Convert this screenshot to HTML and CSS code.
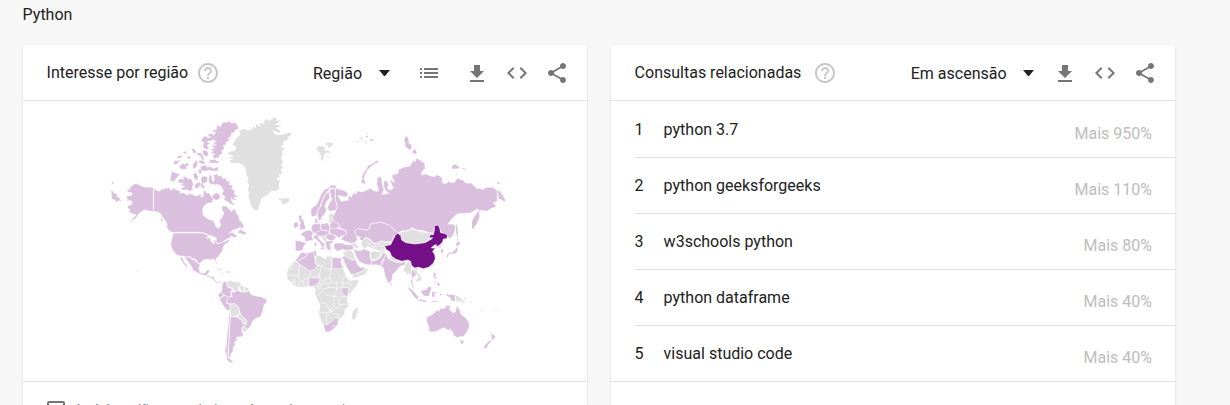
FILE: index.html
```html
<!DOCTYPE html>
<html lang="pt-BR">
<head>
<meta charset="utf-8">
<title>Python</title>
<link rel="stylesheet" href="styles.css">
</head>
<body>
<svg class="defs" width="0" height="0" aria-hidden="true">
  <symbol id="help" viewBox="0 0 24 24"><path d="M11 18h2v-2h-2v2zm1-16C6.480 2 2 6.480 2 12s4.480 10 10 10 10-4.480 10-10S17.520 2 12 2zm0 18c-4.410 0-8-3.590-8-8s3.590-8 8-8 8 3.590 8 8-3.590 8-8 8zm0-14c-2.210 0-4 1.790-4 4h2c0-1.100.9-2 2-2s2 .9 2 2c0 2-3 1.750-3 5h2c0-2.250 3-2.500 3-5 0-2.210-1.790-4-4-4z"/></symbol>
  <symbol id="list" viewBox="0 0 24 24"><path d="M3 13h2v-2H3v2zm0 4h2v-2H3v2zm0-8h2V7H3v2zm4 4h14v-2H7v2zm0 4h14v-2H7v2zM7 7v2h14V7H7z"/></symbol>
  <symbol id="download" viewBox="0 0 24 24"><path d="M19 10h-4V4H9v6H5l7 7 7-7zM5 19v2h14v-2H5z"/></symbol>
  <symbol id="code" viewBox="0 0 24 24"><path d="M9.400 16.600L4.800 12l4.600-4.600L8 6l-6 6 6 6 1.400-1.400zm5.200 0l4.600-4.600-4.600-4.600L16 6l6 6-6 6-1.400-1.400z"/></symbol>
  <symbol id="share" viewBox="0 0 24 24"><path d="M18 16.080c-.76 0-1.440.3-1.960.77L8.910 12.700c.05-.23.09-.46.09-.7s-.04-.47-.09-.7l7.050-4.110c.54.5 1.250.81 2.040.81 1.660 0 3-1.340 3-3s-1.340-3-3-3-3 1.340-3 3c0 .24.04.47.09.7L8.040 9.810C7.500 9.310 6.790 9 6 9c-1.660 0-3 1.340-3 3s1.340 3 3 3c.79 0 1.500-.31 2.040-.81l7.120 4.160c-.05.21-.08.43-.08.65 0 1.610 1.310 2.920 2.920 2.920s2.920-1.310 2.920-2.920-1.310-2.920-2.920-2.920z"/></symbol>
</svg>
<h1 class="page-title">Python</h1>
<main class="cards">
  <section class="card">
    <header class="card-head">
      <h2 class="card-title">Interesse por região</h2>
      <svg class="icon help"><use href="#help"/></svg>
      <div class="tools">
        <span class="select select-wide">Região</span><span class="caret caret-wide"></span>
        <svg class="icon list"><use href="#list"/></svg>
        <svg class="icon"><use href="#download"/></svg>
        <svg class="icon"><use href="#code"/></svg>
        <svg class="icon"><use href="#share"/></svg>
      </div>
    </header>
    <div class="map-box">
      <svg class="map" viewBox="23 101 564 280">
        <!-- North America -->
        <g transform="translate(100 110) scale(.33333)">
          <g class="on">
            <path d="M160 233 150 231 139 232 125 228 115 223 108 220 98 225 90 231 90 237 80 241 84 247 95 248 96 254 88 257 78 259 82 267 80 273 92 272 97 276 94 284 84 287 82 293 90 299 85 305 96 311 108 314 103 322 95 330 84 339 96 334 108 325 114 315 122 306 134 300 148 303 160 305z"/>
            <path d="M161 234 168 240 178 244 186 236 192 238 198 232 203 237 207 230 212 241 222 234 230 240 240 241 240 250 250 248 262 256 268 250 276 253 290 258 302 251 304 262 310 258 310 246 316 240 320 250 326 248 334 258 340 266 336 278 322 280 312 288 308 300 310 315 320 325 334 330 343 335 348 350 357 355 362 345 358 332 366 322 372 310 366 300 366 288 380 288 388 298 395 305 400 296 405 298 410 310 416 318 418 329 428 340 432 350 428 356 420 352 408 358 396 362 386 372 396 366 404 372 412 378 404 384 394 378 388 384 376 390 366 398 354 402 346 398 350 385 340 380 325 375 308 367 218 367 210 360 204 350 200 342 196 332 188 322 182 312 174 306 161 305z"/>
            <path d="M220 369H308L320 374 326 378 318 384 330 383 334 396 344 402 340 390 348 392 350 402 366 398 378 392 386 388 390 393 382 398 374 404 370 412 366 425 358 436 348 446 350 455 353 463 349 462 343 447 335 449 322 448 310 450 303 458 296 462 290 452 284 446 276 446 272 440 260 441 248 438 240 438 230 434 220 424 214 412 213 400 216 385z"/>
            <path d="M250 441 271 442 276 449 284 449 290 458 300 463 297 475 300 487 309 490 316 488 320 480 330 480 326 490 318 497 306 495 290 487 278 480 276 472 268 460 258 447z"/>
            <path d="M210 212 214 190 216 183 224 188 236 190 238 196 230 204 226 208 224 216 218 214z"/>
            <path d="M232 211 242 206 252 208 246 200 258 200 266 208 273 204 278 216 280 224 276 234 283 240 274 240 270 246 262 239 252 241 240 237 254 229 240 226 250 220 236 219z"/>
          </g>
          <g class="on isle">
            <path d="M34 240 44 251 52 253 50 260 58 264 64 275 56 271 50 276 42 268 36 268zM35 216 40 217 41 221 36 221zM240 439 247 443 252 455 262 470 260 472 250 460 244 450zM198 344 206 350 216 364 214 367 204 358zM181 320 187 328 189 337 183 330zM111 484h3v2h-3zM414 369 420 358 430 363 440 370 430 374 424 370z"/>
            <path d="M220 160 228 150 232 155 241 147 237 156 228 164zM230 142 244 136 246 141 236 145zM250 126 259 124 259 131 251 130zM238 170 248 160 254 164 262 158 267 166 256 170 262 176 244 178zM275 115 284 119 290 127 280 130zM263 137 272 142 268 148 262 144zM282 158 290 151 292 166 283 177 278 169zM288 130 302 128 308 140 298 137zM294 154 306 151 316 157 310 162 300 159zM280 190 288 189 294 200 291 212 283 204zM296 178 306 180 302 192 296 188zM286 222 300 217 300 226 292 236 284 232zM304 202 314 198 320 212 314 220 304 216zM306 224 316 230 308 236z"/>
          </g>
          <path class="off isle" d="M318 497 326 494 328 499 342 499 344 508 348 514 356 516 366 514 364 520 352 520 344 516 336 506zM346 475 358 475 371 482 366 482 354 477zM376 485 390 484 394 488 380 488zM362 489h6v2h-6z"/>
        </g>
        <!-- Arctic islands, Greenland, Iceland -->
        <g transform="translate(200 110) scale(.33333)">
          <g class="on isle">
            <path d="M66 43 72 36 80 39 86 34 94 40 105 38 112 46 115 56 104 60 103 67 94 70 91 80 83 83 88 91 78 96 76 106 69 106 72 118 64 120 66 132 56 136 58 144 48 142 44 147 38 137 46 132 34 128 41 123 32 116 46 116 34 106 50 107 40 98 51 95 37 88 29 96 21 84 34 82 23 75 35 70 40 77 48 67 37 62 51 57 50 46 62 52z"/>
            <path d="M8 84 18 78 27 90 21 95 30 101 20 105 27 115 17 118 8 108 14 98 4 94zM8 122 18 121 26 132 20 140 10 134zM3 137 9 136 12 149 4 148zM30 151 44 149 54 154 56 160 40 158 28 159zM1 170 12 168 14 161 20 172 32 170 40 176 54 171 55 181 42 183 26 180 14 183 4 180z"/>
            <path d="M28 198 34 194 35 210 42 220 34 224 26 214zM42 196 52 192 55 200 64 197 66 206 76 205 80 214 88 214 88 226 98 226 94 236 104 242 102 251 113 262 101 261 109 271 98 268 92 260 95 275 106 286 92 281 80 273 72 270 76 260 66 252 72 242 62 226 50 222 44 226 38 218 44 210zM40 254 50 248 60 257 58 267 48 270 38 264zM11 202 20 200 23 213 13 218zM2 220 10 218 8 230 2 230z"/>
            <path d="M298 318 304 320 301 328 296 325z"/>
          </g>
          <path class="off isle" d="M118 62 132 56 148 64 146 56 156 62 160 49 170 56 166 40 180 50 180 38 190 42 196 28 210 32 222 22 230 25 228 34 244 29 233 40 222 43 243 47 226 54 242 62 240 69 218 60 222 72 238 76 252 73 272 67 274 74 264 82 262 90 252 93 249 104 242 112 255 115 246 124 248 134 242 144 250 156 243 164 250 174 242 178 248 190 236 193 239 202 228 206 240 212 236 224 238 236 226 242 216 243 204 252 194 260 184 265 181 278 176 290 175 300 168 302 160 297 152 286 151 272 145 260 148 248 143 238 148 226 142 216 145 206 139 194 138 180 133 169 120 160 106 158 94 159 88 151 100 148 86 142 104 138 80 132 92 124 104 124 110 112 98 104 104 93 112 82 121 76z"/>
          <path class="off isle" d="M236 264 246 267 254 264 265 264 269 271 260 280 250 283 242 277 247 273 238 270z"/>
        </g>
        <!-- South America -->
        <g transform="translate(200 200) scale(.33333)">
          <g class="on">
            <path d="M72 243 80 247 84 262 98 266 92 276 94 290 84 294 74 286 62 278 66 268 66 255z"/>
            <path d="M60 276 72 284 66 290 58 294 54 286z"/>
            <path d="M58 296 68 290 74 286 86 292 80 302 80 310 90 312 91 322 88 334 78 328 68 314z"/>
            <path d="M86 292 96 290 94 276 104 276 114 270 118 274 128 276 140 274 146 270 154 284 168 288 184 290 198 296 201 304 192 316 188 334 182 350 166 356 158 364 152 378 142 390 130 382 140 372 138 360 128 350 118 340 116 322 104 312 92 312 80 308 80 300z"/>
            <path d="M92 350 104 350 114 352 128 364 130 372 140 368 136 376 126 384 126 396 130 402 126 410 110 412 112 420 104 426 106 434 100 442 99 454 92 464 92 474 84 470 86 440 88 400 89 370z"/>
            <path d="M88 334 92 350 88 380 87 420 84 450 84 472 92 478 101 488 90 488 80 478 80 466 74 450 79 440 80 414 84 380z"/>
          </g>
          <g class="off">
            <path d="M80 247 90 241 100 245 118 246 124 256 116 262 116 270 102 276 98 264 84 262z"/>
            <path d="M122 256 134 260 132 276 124 274 118 264zM134 260 147 264 144 274 132 276z"/>
            <path d="M91 312 104 311 116 322 119 336 112 346 100 350 92 348 90 330z"/>
            <path d="M114 346 120 338 128 350 138 358 140 368 130 372 124 360 114 354z"/>
            <path d="M128 380 142 386 140 394 134 397 126 394z"/>
          </g>
        </g>
        <!-- Europe, Africa, Middle East -->
        <g transform="translate(280 200) scale(.33333)">
          <g class="off">
            <path d="M40 186 50 182 88 210 108 198 122 194 154 206 190 204 194 216 200 232 210 242 238 238 232 254 216 274 206 288 202 300 206 318 194 330 194 342 180 356 172 372 160 386 148 394 136 394 130 376 122 360 116 340 120 316 112 300 104 280 106 268 100 258 82 260 60 262 46 260 34 248 22 238 20 222 24 206 34 192z"/>
            <path d="M108 168 114 165 126 170 136 176 142 168 155 170 156 206 150 210 120 196 110 196 106 182z"/>
            <path d="M230 320 235 328 226 358 218 361 215 348 218 334z"/>
            <path d="M146 42 160 40 162 60 158 70 144 68 148 58z"/>
            <path d="M246 120 258 114 270 120 282 130 292 130 304 122 318 128 335 124 330 134 316 140 314 148 298 154 288 150 276 144 262 140 252 148 244 134z"/>
            <path d="M270 156 282 152 296 156 310 148 320 152 304 160 298 172 286 180 272 178z"/>
            <path d="M206 126 228 130 238 142 228 146 216 138z"/>
            <path d="M188 156 214 150 222 164 228 180 216 180 194 170z"/>
            <path d="M216 224 234 218 252 212 254 202 264 210 254 224 232 232 218 234z"/>
            <path d="M122 106 136 108 142 120 138 128 130 122z"/>
          </g>
          <path class="border" d="M36 192 38 200 26 212M58 190 56 230 24 224M56 230 64 246 90 226 92 210M124 196 118 228 90 236M118 228 124 244 150 232 152 208M150 232 154 246 186 246 192 232 200 226M44 236 46 258M58 242 56 262M70 240 72 260M82 236 84 260M34 236 42 246 30 250M118 244 112 262 130 250 154 250M104 272 122 262 124 252M112 286 124 280 128 266 154 262 170 264 170 246M170 264 188 262 186 246M188 262 190 248 210 250 216 258M118 308 138 310 142 320 150 334 164 312 160 296 168 282 170 264M118 338 150 338 150 316M150 338 166 326 180 320 178 300 170 288M140 340 140 374M160 340 176 344 174 356M202 290 180 290M180 314 206 312M132 284 168 290M206 262 216 272"/>
          <path class="border" d="M262 128 282 142 292 140M292 130 302 138 320 140"/>
          <g class="on">
            <path d="M44 184 56 168 64 156 80 160 80 168 66 176 56 184z"/>
            <path d="M80 160 102 154 104 168 106 190 112 198 98 212 88 212 50 186 66 176 80 168z"/>
            <path d="M100 152 108 151 110 166 104 174z"/>
            <path d="M156 172 182 174 186 182 182 184 190 206H156z"/>
            <path d="M88 234 118 234 118 244 106 256 96 260 86 256z"/>
            <path d="M186 262 206 264 204 280 202 292 186 280z"/>
            <path d="M130 372 142 374 156 364 164 354 174 354 174 372 160 388 148 396 136 396z"/>
            <path d="M64 100 78 92 90 90 100 98 96 108 100 122 88 122 76 126 74 112 62 104z"/>
            <path d="M46 122 56 122 80 128 70 140 70 148 58 154 46 152z"/>
            <path d="M94 78 104 70 122 72 124 92 116 100 100 100 94 90z"/>
            <path d="M122 72 144 68 150 84 148 94 124 90z"/>
            <path d="M100 108 114 102 122 108 114 112 122 122 134 132 132 142 126 146 122 132 108 118 100 116z"/>
            <path d="M102 100 124 90 148 94 146 104 124 110z"/>
            <path d="M142 102 158 102 168 112 160 122 148 122 136 110z"/>
            <path d="M148 86 170 84 190 90 202 96 198 106 182 108 180 116 164 106 150 100z"/>
            <path d="M150 72 162 58 174 66 180 80 166 86 150 86z"/>
            <path d="M136 124 158 122 160 128 150 132 154 148 144 152 138 140z"/>
            <path d="M162 130 180 128 200 134 218 134 222 148 200 152 188 148 174 154 162 146z"/>
            <path d="M224 94 232 86 260 90 268 86 270 72 300 66 325 74 345 90 357 98 350 108 340 110 337 124 316 126 304 122 290 130 280 128 270 118 258 112 246 122 236 118 242 112 226 106z"/>
            <path d="M220 146 236 152 246 150 252 146 270 154 270 170 276 186 270 196 252 192 240 186 230 174z"/>
            <path d="M186 170 194 168 216 180 228 180 232 192 240 202 254 202 252 212 234 218 222 224 212 222 200 202z"/>
            <path d="M274 184 290 180 302 172 308 158 320 160 314 172 306 184 302 198 286 194 276 196z"/>
          </g>
          <g class="on isle">
            <path d="M58 48 66 45 64 56 70 60 72 72 76 80 74 87 59 90 62 82 58 74 63 70 58 60zM43 68 52 66 55 78 46 84 41 80zM106 56 112 56 112 68 106 70zM104 128 109 128 109 138 104 138zM120 144 131 144 130 150zM148 154 157 155 156 158zM114 68 118 66 118 71z"/>
            <path class="hole" d="M158 375 163 374 163 379 158 380z"/>
          </g>
        </g>
        <!-- Scandinavia and Russia -->
        <g transform="translate(300 110) scale(.33333)">
          <g class="on">
            <path d="M34 320 32 300 40 290 50 284 56 270 64 252 74 238 86 234 92 225 108 226 109 236 92 234 82 244 74 256 66 272 60 290 54 300 48 318z"/>
            <path d="M54 300 62 290 68 270 76 254 86 244 90 262 80 276 74 290 80 300 74 312 66 320 62 332 56 330 52 316z"/>
            <path d="M88 240 106 234 106 268 112 290 106 302 88 304 82 294 88 280 96 268 92 256z"/>
            <path d="M106 234 120 238 134 242 146 252 138 262 120 258 114 256 118 264 122 272 128 274 138 270 144 272 146 254 154 262 160 249 168 252 172 242 186 246 200 240 212 234 220 242 232 244 236 240 230 222 232 204 240 198 246 208 246 222 252 238 246 254 256 252 266 250 254 238 250 222 254 210 262 214 266 226 262 236 272 240 280 234 272 218 272 208 284 218 278 204 274 196 294 190 296 178 310 172 330 168 340 150 346 155 350 143 362 152 374 160 376 175 365 186 365 195 378 191 390 197 405 200 408 194 420 198 428 206 426 216 435 222 445 215 462 218 472 205 490 210 496 218 505 220 514 219 525 230 530 236 540 234 548 239 558 232 580 232 592 242V274L580 278 590 290 575 295 560 304 545 302 530 298 510 310 490 310 472 312 460 322 450 334 444 342 462 342 467 352 464 365 458 378 448 388 443 378 430 372 420 360 418 350 410 346 400 352 405 362 395 372 370 362 350 360 335 353 328 360 305 363 295 370 285 360 265 344 240 336 210 342 208 356 200 360 172 356 164 364 172 386 168 396 155 400 140 396 122 388 130 378 140 370 138 362 120 354 115 340 100 332 98 320 105 308 112 290 106 268z"/>
          </g>
          <g class="on isle">
            <path d="M540 296 537 308 539 318 534 332 526 345 518 352 516 335 522 322 532 308zM594 240 603 248 609 258 615 268 614 276 604 268 596 266z"/>
            <path d="M182 216 188 208 186 200 194 184 200 178 204 168 220 160 232 151 235 156 216 166 202 180 194 196 192 206 197 222 187 218z"/>
            <path d="M312 92 318 78 324 84 327 96 318 100zM316 100 326 98 336 108 332 120 324 116 316 109zM337 125 344 116 351 128 342 133zM456 168 464 163 474 168 480 174 466 176 456 176zM486 174 498 178 492 180zM466 191 474 194 468 196zM592 216 598 215 599 221 590 220z"/>
            <path d="M158 94 162 92 162 95zM170 97 175 92 176 97zM184 90 188 88 190 92zM196 79 204 78 202 83zM195 98 201 95 200 100zM209 90 219 86 220 90 212 94zM202 68 205 70 202 74zM180 84 186 82 185 87z"/>
            <path d="M470 342 472 350 472 364 474 378 472 384 469 368z"/>
          </g>
          <path class="off isle" d="M49 112 58 108 64 112 65 105 73 111 75 122 82 124 78 132 72 130 71 144 65 154 62 142 66 137 55 130 64 129 53 124zM74 102 83 98 99 98 98 108 91 108 88 116 82 105zM80 120 88 123 90 129 82 128zM77 137 90 142 82 141z"/>
        </g>
        <!-- Asia and Oceania -->
        <g transform="translate(370 220) scale(.33333)">
          <g class="on">
            <path d="M32 138 38 128 44 112 50 104 56 116 76 126 92 128 108 122 104 136 92 138 88 142 80 152 68 164 66 180 60 188 54 190 48 175 42 155 40 144z"/>
            <path d="M120 152 134 148 142 162 132 170 128 176 128 190 134 208 126 200 122 184 126 174z"/>
            <path d="M170 292 182 286 192 280 200 270 206 274 212 264 222 266 230 256 242 258 238 268 248 278 256 276 260 254 265 264 270 270 274 284 286 292 296 306 298 322 290 338 280 350 268 350 264 354 250 346 248 334 243 335 241 326 236 332 224 324 214 326 200 334 188 336 176 335 177 322 170 304z"/>
          </g>
          <g class="off">
            <path d="M106 132 120 122 124 140 124 152 124 168 118 160 112 164 100 150z"/>
            <path d="M128 148 142 144 142 156 156 174 150 186 136 182 146 172z"/>
            <path d="M88 38 100 34 118 32 126 26 142 32 158 36 184 38 190 44 182 56 164 68 140 72 108 68 94 60 92 46z"/>
            <path d="M60 108 72 114 80 120 96 122 94 128 76 126 58 116z"/>
          </g>
          <path class="peak" d="M82 40 92 46 95 60 108 68 135 72 165 68 185 57 188 53 178 54 180 44 190 44 194 28 192 19 202 15 208 20 212 38 222 40 233 46 230 56 220 57 218 66 208 76 198 82 200 74 192 76 184 84 196 84 188 94 194 104 196 116 190 130 176 142 160 146 146 142 134 144 124 136 122 124 112 120 96 124 78 118 64 108 60 96 48 88 44 78 62 74 70 58 76 46z"/>
          <g class="on isle">
            <path d="M112 200 124 208 134 218 144 230 144 238 136 234 124 218zM144 238 156 239 172 243 168 246 148 242zM154 212 168 210 178 198 184 204 181 214 176 228 162 227 155 220zM186 217 200 217 192 221 197 234 192 228 190 234 186 228zM192 157 198 162 194 170 202 176 196 177 190 168zM203 187 210 192 208 199 201 194zM193 183 199 186 195 190zM228 220 236 225 254 225 255 244 244 241 240 231 232 229zM62 188 66 193 61 197zM155 152 159 153 156 157zM190 130 194 134 191 140zM184 243 204 243 196 247zM210 222h6v4h-6z"/>
            <path d="M269 361 282 362 276 374zM363 337 368 344 377 348 373 355 366 360 365 350zM361 359 362 365 354 374 350 384 339 385 344 377z"/>
            <path d="M257 74 262 66 271 65 268 74 261 78zM262 80 263 92 256 101 244 100 236 104 234 100 248 96 257 88zM230 101 236 106 232 114zM214 84 220 90 219 98 213 98zM260 52 264 60 261 63zM259 10 262 24 263 40 258 38zM309 -1 323 -1 319 12 310 27 305 24z"/>
          </g>
          <path class="off isle" d="M204 78 216 72 212 84 206 84zM256 226 268 231 286 249 280 250 272 243 260 245zM282 236 290 232 286 239zM300 244 306 249 302 250zM332 269 338 273 334 275zM376 273h4v2h-4z"/>
        </g>
      </svg>
    </div>
    <label class="low-volume"><span class="box"></span>Incluir regiões com baixo volume de pesquisas</label>
  </section>
  <section class="card">
    <header class="card-head">
      <h2 class="card-title">Consultas relacionadas</h2>
      <svg class="icon help help-far"><use href="#help"/></svg>
      <div class="tools">
        <span class="select">Em ascensão</span><span class="caret"></span>
        <svg class="icon"><use href="#download"/></svg>
        <svg class="icon"><use href="#code"/></svg>
        <svg class="icon"><use href="#share"/></svg>
      </div>
    </header>
    <ol class="queries">
      <li class="query"><span class="rank">1</span><span>python 3.7</span><span class="rise">Mais 950%</span></li>
      <li class="query"><span class="rank">2</span><span>python geeksforgeeks</span><span class="rise">Mais 110%</span></li>
      <li class="query"><span class="rank">3</span><span>w3schools python</span><span class="rise">Mais 80%</span></li>
      <li class="query"><span class="rank">4</span><span>python dataframe</span><span class="rise">Mais 40%</span></li>
      <li class="query"><span class="rank">5</span><span>visual studio code</span><span class="rise">Mais 40%</span></li>
    </ol>
  </section>
</main>
</body>
</html>
```
FILE: styles.css
```css
* { box-sizing: border-box; }
html, body { height: 100%; }
body {
  margin: 0;
  overflow: hidden;
  background: #f7f7f7;
  color: #212121;
  font: 16px/24px Roboto, sans-serif;
}
.defs { display: none; }
.page-title {
  margin: 0;
  padding: 3px 0 0 22.6px;
  height: 45px;
  font-size: 16px;
  font-weight: 400;
}
.cards { display: flex; gap: 24px; padding-left: 23px; }
.card {
  width: 564px;
  height: 360px;
  overflow: hidden;
  background: #fff;
  border-radius: 2px 2px 0 0;
  box-shadow: 0 0 2px rgba(0, 0, 0, .1), 0 2px 2px rgba(0, 0, 0, .08);
}
.card-head {
  display: flex;
  align-items: center;
  height: 56px;
  padding: 0 18.4px 0 23.6px;
  border-bottom: 1px solid #e0e0e0;
}
.card-title { margin: 0; font-size: 16px; font-weight: 400; }
.icon { display: block; flex: none; width: 24px; height: 24px; fill: #757575; }
.help { margin-left: 7.500px; fill: #c6c6c6; }
.help-far { margin-left: 11.500px; }
.tools { display: flex; align-items: center; gap: 16px; margin-left: auto; padding-top: 1px; }
.select { padding-top: 1px; }
.select-wide { margin-right: 0.600px; }
.list { margin-right: 8px; }
.caret {
  width: 11px;
  margin-right: 3px;
  border: solid transparent;
  border-width: 6px 5.5px 0;
  border-top-color: #212121;
}
.caret-wide { margin-right: 11px; }
.map-box { height: 281px; border-bottom: 1px solid #e0e0e0; }
.map { display: block; width: 564px; height: 280px; }
.on { fill: #dabfde; }
.off { fill: #e0e0e0; }
.peak { fill: #740f87; }
.on, .off, .peak, .border { stroke: #fff; stroke-width: 1.7; stroke-linejoin: round; }
.isle { stroke: none; }
.hole { fill: #f4ecf5; }
.border { fill: none; }
.low-volume {
  display: flex;
  align-items: center;
  padding: 18px 24px;
  color: #757575;
  font-size: 14px;
  line-height: 20px;
}
.box { width: 18px; height: 18px; margin-right: 11.500px; border: 2px solid #757575; border-radius: 2px; }
.queries { margin: 0; padding: 1px 0 0; list-style: none; }
.query {
  display: flex;
  align-items: center;
  height: 56px;
  margin-left: 24px;
  padding-right: 23px;
  border-bottom: 1px solid #e0e0e0;
}
.query:last-child { margin-left: 0; padding-left: 24px; }
.rank { width: 29px; margin-left: -0.400px; }
.rise { margin-left: auto; padding-top: 8px; color: #bdbdbd; }
```
